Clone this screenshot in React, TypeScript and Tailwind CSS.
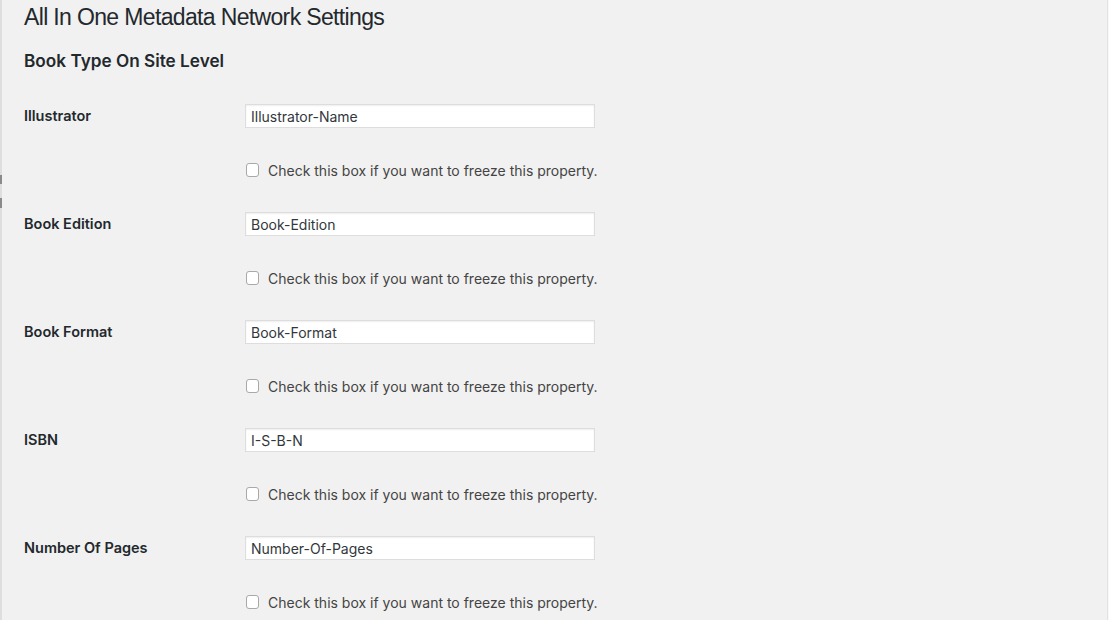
const fields = [
  { label: "Illustrator", value: "Illustrator-Name" },
  { label: "Book Edition", value: "Book-Edition" },
  { label: "Book Format", value: "Book-Format" },
  { label: "ISBN", value: "I-S-B-N" },
  { label: "Number Of Pages", value: "Number-Of-Pages" },
];

function FieldRow({ label, value }: { label: string; value: string }) {
  return (
    <div>
      <div className="flex h-[54px] items-center">
        <div className="w-[221px] text-[14.5px] font-semibold text-[#23282d]">{label}</div>
        <input
          className="h-[24px] w-[350px] border border-[#dddddd] bg-white px-[5px] text-[14px] text-[#32373c] shadow-[inset_0_1px_2px_rgba(0,0,0,0.07)] outline-none"
          defaultValue={value}
          readOnly
        />
      </div>
      <div className="flex h-[54px] items-center pl-[221px]">
        <label className="flex items-center gap-[9px] text-[14px] text-[#444444]">
          <span className="ml-[1px] block h-[14px] w-[13px] rounded-[3px] border border-[#a9a9a9] bg-white" />
          Check this box if you want to freeze this property.
        </label>
      </div>
    </div>
  );
}

export default function App() {
  return (
    <div
      className="flex h-[620px] w-[1109px] overflow-hidden bg-[#f1f1f1]"
      style={{ fontFamily: "Inter, sans-serif" }}
    >
      <div className="flex w-[2px] flex-col bg-[#dedede]">
        <div className="h-[175px]" />
        <div className="h-[9px] bg-[#8a8a8a]" />
        <div className="h-[14px]" />
        <div className="h-[10px] bg-[#8a8a8a]" />
      </div>
      <div className="flex-1 pl-[22px]">
        <h1 className="pt-[3px] font-['Liberation_Sans',Arial,sans-serif] text-[23px] leading-[29px] font-normal tracking-[-0.65px] text-[#23282d]">
          All In One Metadata Network Settings
        </h1>
        <h2 className="mt-[18px] text-[17.2px] leading-[22px] font-semibold text-[#23282d]">
          Book Type On Site Level
        </h2>
        <div className="mt-[17px]">
          {fields.map((f) => (
            <FieldRow key={f.label} label={f.label} value={f.value} />
          ))}
        </div>
      </div>
      <div className="w-[1px] bg-[#e2e2e2]" />
      <div className="w-[1px] bg-[#f8f8f8]" />
    </div>
  );
}
